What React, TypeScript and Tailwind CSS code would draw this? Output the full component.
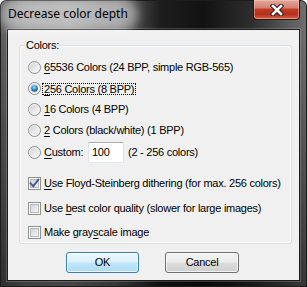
import type { ReactNode } from "react";

// Windows 7 (Aero) style "Decrease color depth" dialog

function Radio({ checked = false }: { checked?: boolean }) {
  return (
    <svg width="13" height="13" viewBox="0 0 13 13" className="shrink-0">
      <defs>
        <linearGradient id="radio-face" x1="0" y1="0" x2="1" y2="1">
          <stop offset="0" stopColor="#d2d2d2" />
          <stop offset="1" stopColor="#fbfbfb" />
        </linearGradient>
        <radialGradient id="radio-dot" cx="0.45" cy="0.35" r="0.7">
          <stop offset="0" stopColor="#b9e4fb" />
          <stop offset="0.45" stopColor="#3d95d6" />
          <stop offset="1" stopColor="#0f3f6e" />
        </radialGradient>
      </defs>
      <circle cx="6.5" cy="6.5" r="6" fill="#f6f6f6" stroke="#8b8d8f" />
      <circle cx="6.5" cy="6.5" r="4.6" fill="url(#radio-face)" />
      {checked && <circle cx="6.5" cy="6.5" r="3.3" fill="url(#radio-dot)" />}
    </svg>
  );
}

function Checkbox({ checked = false }: { checked?: boolean }) {
  return (
    <svg width="13" height="13" viewBox="0 0 13 13" className="shrink-0">
      <defs>
        <linearGradient id="check-face" x1="0" y1="0" x2="1" y2="1">
          <stop offset="0" stopColor="#cfd1d4" />
          <stop offset="1" stopColor="#f7f7f7" />
        </linearGradient>
      </defs>
      <rect x="0.5" y="0.5" width="12" height="12" fill="#fdfdfd" stroke="#8e8f8f" />
      <rect x="2.5" y="2.5" width="8" height="8" fill="url(#check-face)" stroke="#b6b9bd" />
      {checked && (
        <path
          d="M2.6 6.4 L5.2 9.2 L10.4 2.6"
          fill="none"
          stroke="#46589a"
          strokeWidth="1.9"
          strokeLinecap="square"
        />
      )}
    </svg>
  );
}

/** Mnemonic letter: underlined like a Win32 accelerator. */
function K({ children }: { children: ReactNode }) {
  return <span className="underline decoration-1 underline-offset-[2px]">{children}</span>;
}

function Row({ h, children }: { h: string; children: ReactNode }) {
  return <div className={`flex items-center ${h}`}>{children}</div>;
}

function CloseButton() {
  return (
    <div className="flex h-[20px] w-[47px] items-center justify-center rounded-b-[4px] border border-t-0 border-[#3a0f08] bg-[linear-gradient(to_bottom,#e0a89b_0%,#d48373_40%,#c23a24_50%,#b5301c_75%,#d2644a_100%)] shadow-[inset_0_0_0_1px_rgba(255,210,200,0.45)]">
      <svg width="14" height="12" viewBox="0 0 14 12">
        <path d="M3 2 L11 10 M11 2 L3 10" stroke="#3b1510" strokeWidth="4.6" strokeLinecap="square" />
        <path d="M3 2 L11 10 M11 2 L3 10" stroke="#ffffff" strokeWidth="2.6" strokeLinecap="square" />
      </svg>
    </div>
  );
}

function Button({ children, primary = false }: { children: ReactNode; primary?: boolean }) {
  return (
    <button
      className={
        primary
          ? "flex h-[21px] w-[73px] items-center justify-center rounded-[3px] border border-[#3c7fb1] bg-[linear-gradient(to_bottom,#ecf7fd_0%,#dcf1fc_48%,#c1e6f9_52%,#aedbf4_100%)] shadow-[inset_0_0_0_1px_rgba(255,255,255,0.7)]"
          : "flex h-[21px] w-[74px] items-center justify-center rounded-[3px] border border-[#707070] bg-[linear-gradient(to_bottom,#f2f2f2_0%,#ebebeb_48%,#dddddd_52%,#cfcfcf_100%)] shadow-[inset_0_0_0_1px_rgba(255,255,255,0.75)]"
      }
    >
      {children}
    </button>
  );
}

export default function App() {
  return (
    <div className="h-[287px] w-[307px] overflow-hidden rounded-t-[6px] bg-[image:linear-gradient(to_bottom,rgba(0,0,0,0)_0%,rgba(0,0,0,0)_12%,rgba(0,0,0,0.5)_100%),linear-gradient(to_right,#5a5a5a_0%,#7e7e7e_8%,#8a8a8a_22%,#6a6a6a_38%,#1e1e1e_52%,#121212_66%,#2e2e2e_82%,#707070_100%)] shadow-[inset_0_0_0_1px_#1c1c1c] font-['Liberation_Sans',Arial,sans-serif] text-[11px] tracking-[-0.25px] whitespace-nowrap text-black">
      {/* Title bar */}
      <div className="flex h-[29px] items-start">
        <div className="ml-[8px] mt-[6px] rounded-full bg-white/45 px-[2px] shadow-[0_0_10px_8px_rgba(255,255,255,0.45)]">
          <span className="-ml-[2px] font-['Noto_Sans',sans-serif] text-[12px] leading-[16px] tracking-normal text-black">
            Decrease color depth
          </span>
        </div>
        <div className="ml-auto mr-[7px]">
          <CloseButton />
        </div>
      </div>

      {/* Client area */}
      <div className="ml-[7px] h-[252px] w-[293px] border border-[#1c1c1c] bg-[#f0f0f0] pl-[11px] pt-[15px] shadow-[0_0_0_1px_rgba(255,255,255,0.18)]">
        <div className="relative h-[199px] w-[273px] rounded-[3px] border border-[#d5dfe5] shadow-[inset_0_0_0_1px_#ffffff]">
          <span className="absolute -top-[8px] left-[5px] bg-[#f0f0f0] px-[1px] leading-[14px]">
            Colors:
          </span>
          <div className="flex flex-col pl-[8px] pt-[11px]">
            <Row h="h-[21px]">
              <Radio />
              <span className="ml-[3px]">
                <K>6</K>5536 Colors (24 BPP, simple RGB-565)
              </span>
            </Row>
            <Row h="h-[21px]">
              <Radio checked />
              <span className="ml-[1px] border border-dotted border-black px-[1px] leading-[10px]">
                <K>2</K>56 Colors (8 BPP)
              </span>
            </Row>
            <Row h="h-[21px]">
              <Radio />
              <span className="ml-[3px]">
                <K>1</K>6 Colors (4 BPP)
              </span>
            </Row>
            <Row h="h-[21px]">
              <Radio />
              <span className="ml-[3px]">
                <K>2</K> Colors (black/white) (1 BPP)
              </span>
            </Row>
            <Row h="h-[23px]">
              <Radio />
              <span className="ml-[3px] w-[44px]">
                <K>C</K>ustom:
              </span>
              <div className="flex h-[21px] w-[36px] items-center border border-[#abadb3] border-x-[#e2e3ea] border-b-[#e3e9ef] bg-white pl-[3px]">
                100
              </div>
              <span className="ml-[4px]">(2 - 256 colors)</span>
            </Row>
            <div className="mt-[6px]" />
            <Row h="h-[26px]">
              <Checkbox checked />
              <span className="ml-[3px]">
                <K>U</K>se Floyd-Steinberg dithering (for max. 256 colors)
              </span>
            </Row>
            <Row h="h-[24px]">
              <Checkbox />
              <span className="ml-[3px]">
                Use <K>b</K>est color quality (slower for large images)
              </span>
            </Row>
            <Row h="h-[24px]">
              <Checkbox />
              <span className="ml-[3px]">
                Make gray<K>s</K>cale image
              </span>
            </Row>
          </div>
        </div>

        <div className="ml-[47px] mt-[8px] flex gap-[26px]">
          <Button primary>OK</Button>
          <Button>Cancel</Button>
        </div>
      </div>
    </div>
  );
}
